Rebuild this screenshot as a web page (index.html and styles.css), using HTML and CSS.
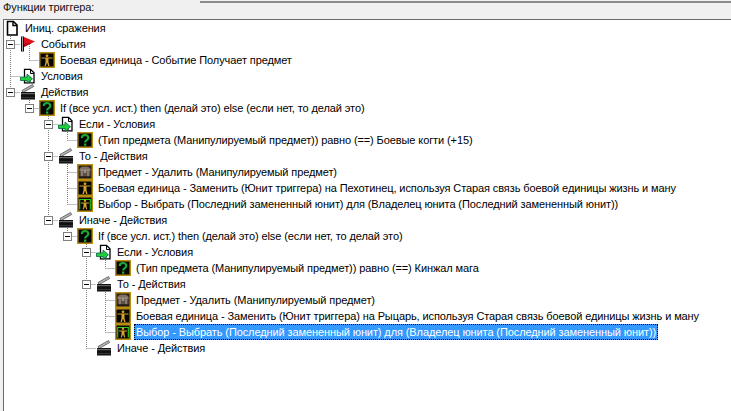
FILE: index.html
```html
<!DOCTYPE html>
<html lang="ru">
<head>
<meta charset="utf-8">
<title>Функции триггера</title>
<link rel="stylesheet" href="styles.css">
</head>
<body>
<svg class="defs" width="0" height="0" aria-hidden="true">
  <symbol id="i-doc" viewBox="0 0 16 16">
    <path d="M3.500 1.500h6l3.500 3.500v10h-9.500z" fill="#fff" stroke="#000" stroke-width="1.600"/>
    <path d="M9 1.500v4h4" fill="none" stroke="#000" stroke-width="1.400"/>
  </symbol>
  <symbol id="i-flag" viewBox="0 0 16 16">
    <rect x="1" y="0.500" width="3" height="15" fill="#111"/>
    <rect x="2" y="0.500" width="1" height="15" fill="#aaa"/>
    <path d="M4 1l11 4.500-11 5.500z" fill="#e0101c"/>
    <path d="M4 7.500l7.500-0.500-7.500 4z" fill="#a80c14"/>
  </symbol>
  <symbol id="i-cond" viewBox="0 0 16 16">
    <path d="M4.500 1.300h6l3.500 3.500v10h-9.500z" fill="#fff" stroke="#000" stroke-width="1.300"/>
    <path d="M10.500 1.500v4h3.500" fill="none" stroke="#000"/>
    <path d="M8 9h3v5h-3z" fill="#888"/>
    <path d="M0.500 9h6.500v-3l5.500 4.800-5.500 4.700v-3h-6.500z" fill="#1fd03a" stroke="#064" stroke-width="0.800"/>
  </symbol>
  <symbol id="i-clap" viewBox="0 0 16 16">
    <path d="M2 6.500l10.500-6 1.200 2-10.500 6z" fill="#b5b5b5" stroke="#444" stroke-width="0.700"/>
    <rect x="1" y="8" width="14" height="7.500" fill="#111"/>
    <rect x="1" y="9" width="14" height="1.200" fill="#666"/>
    <rect x="1" y="13" width="14" height="1" fill="#333"/>
  </symbol>
  <symbol id="i-quest" viewBox="0 0 16 16">
    <rect x="0.750" y="0.750" width="14.500" height="14.500" fill="#050505" stroke="#b98c12" stroke-width="1.500"/>
    <path d="M4.800 6c0-2 1.400-3 3.300-3s3.200 1.100 3.200 2.800c0 2.400-3.200 2.200-3.200 4.700" fill="none" stroke="#18a838" stroke-width="2.200"/>
    <rect x="7" y="11.500" width="2.300" height="2.300" fill="#18a838"/>
  </symbol>
  <symbol id="i-unit" viewBox="0 0 16 16">
    <rect x="0.750" y="0.750" width="14.500" height="14.500" fill="#050505" stroke="#b98c12" stroke-width="1.500"/>
    <circle cx="8" cy="3.800" r="1.400" fill="#d5a22a"/>
    <path d="M2.500 6h11" stroke="#d5a22a" stroke-width="1"/>
    <path d="M6.500 6h3v4l1 4h-1.300l-1.200-3.500-1.200 3.500h-1.300l1-4z" fill="#d5a22a"/>
  </symbol>
  <symbol id="i-pick" viewBox="0 0 16 16">
    <rect x="0.750" y="0.750" width="14.500" height="14.500" fill="#050505" stroke="#b98c12" stroke-width="1.500"/>
    <path d="M2.700 13.500v-10h10.600v10" fill="none" stroke="#21d321" stroke-width="1.100"/>
    <circle cx="8" cy="4.800" r="1.200" fill="#d5a22a"/>
    <path d="M4 7h8" stroke="#d5a22a"/>
    <path d="M6.500 7h3v3l0.800 3.500h-1l-1.300-3-1.300 3h-1l0.800-3.500z" fill="#d5a22a"/>
  </symbol>
  <symbol id="i-item" viewBox="0 0 16 16">
    <rect x="0.750" y="0.750" width="14.500" height="14.500" fill="#2c2218" stroke="#b98c12" stroke-width="1.500"/>
    <path d="M2.500 6c0-2.500 2-3.500 5.500-3.500s5.500 1 5.500 3.500z" fill="#7d6f62"/>
    <rect x="2.500" y="6" width="11" height="6.500" fill="#5c4f44"/>
    <path d="M2.500 6h11M5 6v6.500M11 6v6.500" stroke="#a39a90" stroke-width="1.200"/>
    <rect x="6.800" y="6" width="2.400" height="3" fill="#9c9388"/>
    <rect x="2.500" y="12.500" width="11" height="1" fill="#1b130c"/>
  </symbol>
</svg>

<header class="head">
  <span class="head-label">Функции триггера:</span>
  <span class="head-rule"></span>
</header>

<main class="panel">
  <svg class="lines" width="727" height="391" aria-hidden="true">
    <path d="M10.500 8V72.500M10.500 24.500H20M10.500 56.500H20M10.500 72.500H20
             M29.500 24V40.500M29.500 40.500H39M29.500 72V88.500M29.500 88.500H39
             M48.500 88V200.500M48.500 104.500H58M48.500 136.500H58M48.500 200.500H58
             M67.500 104V120.500M67.500 120.500H77M67.500 136V184.500M67.500 152.500H77M67.500 168.500H77M67.500 184.500H77
             M67.500 200V216.500M67.500 216.500H77
             M86.500 216V328.500M86.500 232.500H96M86.500 264.500H96M86.500 328.500H96
             M105.500 232V248.500M105.500 248.500H115M105.500 264V312.500M105.500 280.500H115M105.500 296.500H115M105.500 312.500H115"
          transform="translate(-4 0)" fill="none" stroke="#808080" stroke-dasharray="1 1"/>
  </svg>
  <ul class="tree">
    <li class="row d0"><svg class="icon"><use href="#i-doc"/></svg><span class="txt">Иниц. сражения</span></li>
    <li class="row d1"><i class="exp"></i><svg class="icon"><use href="#i-flag"/></svg><span class="txt">События</span></li>
    <li class="row d2"><svg class="icon"><use href="#i-unit"/></svg><span class="txt">Боевая единица - Событие Получает предмет</span></li>
    <li class="row d1"><svg class="icon"><use href="#i-cond"/></svg><span class="txt">Условия</span></li>
    <li class="row d1"><i class="exp"></i><svg class="icon"><use href="#i-clap"/></svg><span class="txt">Действия</span></li>
    <li class="row d2"><i class="exp"></i><svg class="icon"><use href="#i-quest"/></svg><span class="txt">If (все усл. ист.) then (делай это) else (если нет, то делай это)</span></li>
    <li class="row d3"><i class="exp"></i><svg class="icon"><use href="#i-cond"/></svg><span class="txt">Если - Условия</span></li>
    <li class="row d4"><svg class="icon"><use href="#i-quest"/></svg><span class="txt">(Тип предмета (Манипулируемый предмет)) равно (==) Боевые когти (+15)</span></li>
    <li class="row d3"><i class="exp"></i><svg class="icon"><use href="#i-clap"/></svg><span class="txt">То - Действия</span></li>
    <li class="row d4"><svg class="icon"><use href="#i-item"/></svg><span class="txt">Предмет - Удалить (Манипулируемый предмет)</span></li>
    <li class="row d4"><svg class="icon"><use href="#i-unit"/></svg><span class="txt">Боевая единица - Заменить (Юнит триггера) на Пехотинец, используя Старая связь боевой единицы жизнь и ману</span></li>
    <li class="row d4"><svg class="icon"><use href="#i-pick"/></svg><span class="txt">Выбор - Выбрать (Последний замененный юнит) для (Владелец юнита (Последний замененный юнит))</span></li>
    <li class="row d3"><i class="exp"></i><svg class="icon"><use href="#i-clap"/></svg><span class="txt">Иначе - Действия</span></li>
    <li class="row d4"><i class="exp"></i><svg class="icon"><use href="#i-quest"/></svg><span class="txt">If (все усл. ист.) then (делай это) else (если нет, то делай это)</span></li>
    <li class="row d5"><i class="exp"></i><svg class="icon"><use href="#i-cond"/></svg><span class="txt">Если - Условия</span></li>
    <li class="row d6"><svg class="icon"><use href="#i-quest"/></svg><span class="txt">(Тип предмета (Манипулируемый предмет)) равно (==) Кинжал мага</span></li>
    <li class="row d5"><i class="exp"></i><svg class="icon"><use href="#i-clap"/></svg><span class="txt">То - Действия</span></li>
    <li class="row d6"><svg class="icon"><use href="#i-item"/></svg><span class="txt">Предмет - Удалить (Манипулируемый предмет)</span></li>
    <li class="row d6"><svg class="icon"><use href="#i-unit"/></svg><span class="txt">Боевая единица - Заменить (Юнит триггера) на Рыцарь, используя Старая связь боевой единицы жизнь и ману</span></li>
    <li class="row d6"><svg class="icon"><use href="#i-pick"/></svg><span class="txt selected">Выбор - Выбрать (Последний замененный юнит) для (Владелец юнита (Последний замененный юнит))</span></li>
    <li class="row d5"><svg class="icon"><use href="#i-clap"/></svg><span class="txt">Иначе - Действия</span></li>
  </ul>
</main>
</body>
</html>
```
FILE: styles.css
```css
* { box-sizing: border-box; }
html, body { margin: 0; height: 100%; overflow: hidden; }
body {
  width: 731px;
  height: 411px;
  background: #f0f0f0;
  font: 11px/16px "Liberation Sans", Arial, sans-serif;
  letter-spacing: -0.1px;
  color: #000;
  display: flex;
  flex-direction: column;
}
.defs { position: absolute; }
.head {
  height: 19px;
  flex: none;
  display: flex;
  padding-left: 3px;
}
.head-label { width: 197px; line-height: 15px; color: #111; }
.head-rule {
  flex: 1;
  height: 2px;
  margin-top: 1px;
  background: #8a8a8a;
}
.panel {
  position: relative;
  flex: 1;
  margin-left: 3px;
  background: #fff;
  border-top: 1px solid #696969;
  border-left: 1px solid #696969;
}
.lines { position: absolute; left: 0; top: 0; }
.tree {
  position: relative;
  list-style: none;
  margin: 0;
  padding: 0;
}
.row {
  position: relative;
  height: 16px;
  display: flex;
  align-items: center;
  white-space: nowrap;
}
.d0 { padding-left: 0; }
.d1 { padding-left: 16px; }
.d2 { padding-left: 35px; }
.d3 { padding-left: 54px; }
.d4 { padding-left: 73px; }
.d5 { padding-left: 92px; }
.d6 { padding-left: 111px; }
.icon { width: 16px; height: 16px; flex: none; display: block; }
.txt {
  height: 16px;
  margin-left: 3px;
  padding: 0 1px;
  border: 1px solid transparent;
  line-height: 14px;
}
.selected {
  background: #3399ff;
  color: #fff;
  border: 1px dotted #000;
}
.exp {
  position: absolute;
  top: 4px;
  width: 9px;
  height: 9px;
  margin-left: -14px;
  background: linear-gradient(#000, #000) center / 5px 1px no-repeat #fff;
  border: 1px solid #808080;
}
```
